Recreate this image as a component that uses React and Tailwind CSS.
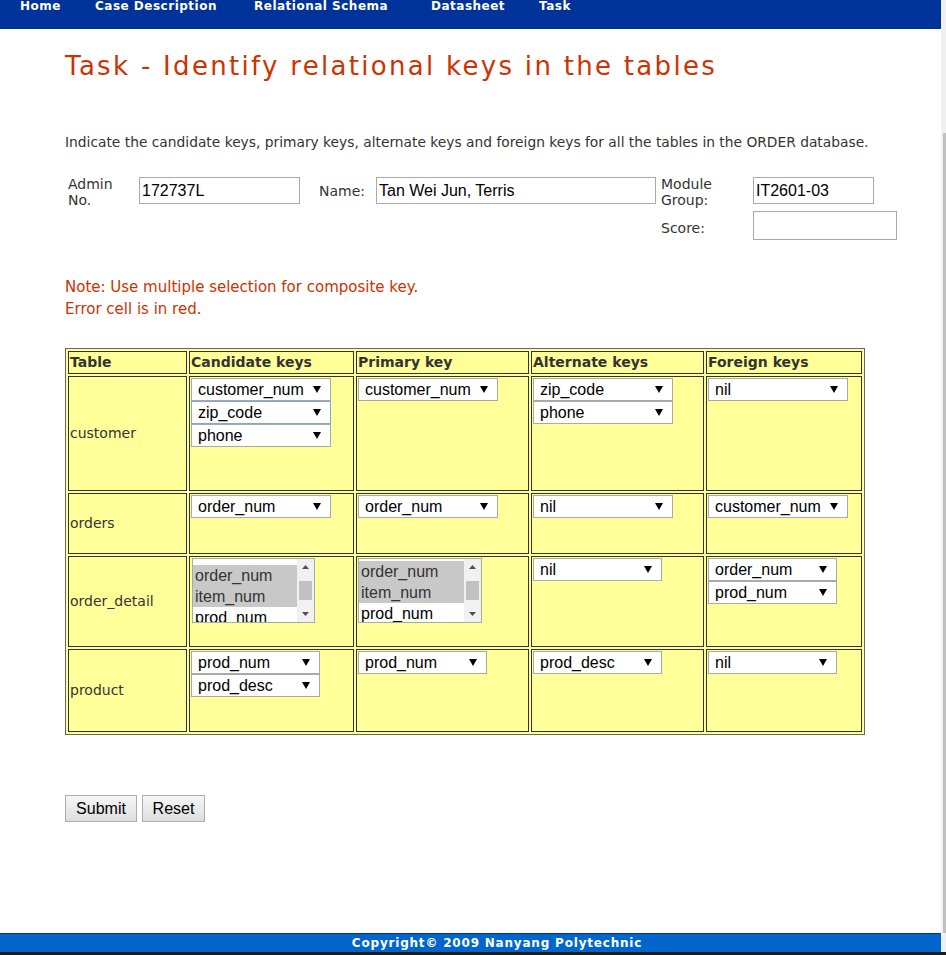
import React from "react";

const verdana = { fontFamily: '"DejaVu Sans", Verdana, sans-serif' };
const arial = { fontFamily: '"Liberation Sans", Arial, sans-serif' };

// slot widths follow the spacing of the original menu
const navItems = [
  { label: "Home", w: "w-[75px]" },
  { label: "Case Description", w: "w-[159px]" },
  { label: "Relational Schema", w: "w-[177px]" },
  { label: "Datasheet", w: "w-[108px]" },
  { label: "Task", w: "w-[60px]" },
];

function Arrow() {
  return (
    <svg width="8" height="7" viewBox="0 0 8 7" className="shrink-0">
      <path d="M0 0 H8 L4 7 Z" fill="#000" />
    </svg>
  );
}

// fake dropdown, drawn so it looks like the old select box
function Pick({ value, w, focus }) {
  return (
    <div
      style={arial}
      className={`flex h-[23px] ${w} items-center justify-between bg-white pl-[6px] pr-[9px] text-[16px] leading-none text-black ${
        focus ? "border border-[#7ea6d8]" : "border border-[#a9a9a9]"
      }`}
    >
      <span>{value}</span>
      <Arrow />
    </div>
  );
}

// multi-select listbox with its own little scrollbar
function ListBox({ items, selected, offset, w }) {
  return (
    <div className={`flex h-[65px] ${w} overflow-hidden border border-[#a9a9a9] bg-white`} style={arial}>
      <div className="flex-1 overflow-hidden">
        <div className={offset}>
          {items.map((it) => (
            <div
              key={it}
              className={`h-[21px] pl-[2px] text-[16px] leading-[21px] ${
                selected.includes(it) ? "bg-[#c8c8c8] text-[#333]" : "text-black"
              }`}
            >
              {it}
            </div>
          ))}
        </div>
      </div>
      <div className="flex w-[17px] flex-col items-center bg-[#f1f1f1]">
        <svg width="7" height="4" viewBox="0 0 7 4" className="mt-[6px]">
          <path d="M0 4 L3.5 0 L7 4 Z" fill="#505050" />
        </svg>
        <div className="mt-[12px] h-[19px] w-[13px] bg-[#c1c1c1]" />
        <div className="flex-1" />
        <svg width="7" height="4" viewBox="0 0 7 4" className="mb-[6px]">
          <path d="M0 0 L3.5 4 L7 0 Z" fill="#505050" />
        </svg>
      </div>
    </div>
  );
}

function Stack({ children }) {
  return <div className="flex flex-col">{children}</div>;
}

const rows = [
  {
    name: "customer",
    h: "h-[115px]",
    cand: (
      <Stack>
        <Pick value="customer_num" w="w-[140px]" />
        <Pick value="zip_code" w="w-[140px]" focus />
        <Pick value="phone" w="w-[140px]" />
      </Stack>
    ),
    prim: <Pick value="customer_num" w="w-[140px]" />,
    alt: (
      <Stack>
        <Pick value="zip_code" w="w-[140px]" />
        <Pick value="phone" w="w-[140px]" />
      </Stack>
    ),
    fk: <Pick value="nil" w="w-[140px]" />,
  },
  {
    name: "orders",
    h: "h-[61px]",
    cand: <Pick value="order_num" w="w-[140px]" />,
    prim: <Pick value="order_num" w="w-[140px]" />,
    alt: <Pick value="nil" w="w-[140px]" />,
    fk: <Pick value="customer_num" w="w-[140px]" />,
  },
  {
    name: "order_detail",
    h: "h-[91px]",
    cand: (
      <div className="pl-[1px]">
        <ListBox
          w="w-[123px]"
          offset="pt-[6px]"
          items={["order_num", "item_num", "prod_num"]}
          selected={["order_num", "item_num"]}
        />
      </div>
    ),
    prim: (
      <ListBox
        w="w-[124px]"
        offset="pt-[2px]"
        items={["order_num", "item_num", "prod_num"]}
        selected={["order_num", "item_num"]}
      />
    ),
    alt: <Pick value="nil" w="w-[129px]" />,
    fk: (
      <Stack>
        <Pick value="order_num" w="w-[129px]" />
        <Pick value="prod_num" w="w-[129px]" />
      </Stack>
    ),
  },
  {
    name: "product",
    h: "h-[83px]",
    cand: (
      <Stack>
        <Pick value="prod_num" w="w-[129px]" />
        <Pick value="prod_desc" w="w-[129px]" />
      </Stack>
    ),
    prim: <Pick value="prod_num" w="w-[129px]" />,
    alt: <Pick value="prod_desc" w="w-[129px]" />,
    fk: <Pick value="nil" w="w-[129px]" />,
  },
];

const cell = "border border-[#333] p-px align-top";

export default function App() {
  return (
    <div className="flex h-[955px] flex-col overflow-hidden bg-[#1c1c1c]">
      <div className="flex flex-1">
        <div className="flex w-[941px] flex-col bg-white">
          {/* top nav, page is scrolled a little so labels sit high */}
          <div
            className="flex h-[29px] items-start bg-[#003399] pl-[20px] text-[12px] font-bold leading-[13px] tracking-[0.5px] text-white"
            style={verdana}
          >
            {navItems.map((n) => (
              <span key={n.label} className={`${n.w} shrink-0`}>
                {n.label}
              </span>
            ))}
          </div>

          <div className="px-[65px] text-[#333]" style={verdana}>
            <h1 className="mt-[21px] text-[26px] leading-[32px] tracking-[2.3px] text-[#cc3300]">
              Task - Identify relational keys in the tables
            </h1>

            <p className="mt-[51px] whitespace-nowrap text-[13.8px] leading-[18px]">
              Indicate the candidate keys, primary keys, alternate keys and foreign keys for all the tables in the ORDER database.
            </p>

            <div className="mt-[25px] ml-[3px] grid grid-cols-[71px_180px_57px_285px_92px_1fr] text-[14px] leading-[16px]">
              <div>
                Admin
                <br />
                No.
              </div>
              <div className="pt-[1px]">
                <div style={arial} className="flex h-[27px] w-[161px] items-center border border-[#a9a9a9] px-[2px] text-[16px] text-black">
                  172737L
                </div>
              </div>
              <div className="pt-[7px]">Name:</div>
              <div className="pt-[1px]">
                <div style={arial} className="flex h-[27px] w-[280px] items-center border border-[#a9a9a9] px-[2px] text-[16px] text-black">
                  Tan Wei Jun, Terris
                </div>
              </div>
              <div>
                Module
                <br />
                Group:
              </div>
              <div className="pt-[1px]">
                <div style={arial} className="flex h-[27px] w-[121px] items-center border border-[#a9a9a9] px-[2px] text-[16px] text-black">
                  IT2601-03
                </div>
              </div>

              <div />
              <div />
              <div />
              <div />
              <div className="pt-[12px]">Score:</div>
              <div className="pt-[3px]">
                <div className="h-[29px] w-[144px] border border-[#a9a9a9]" />
              </div>
            </div>

            <div className="mt-[36px] text-[15px] leading-[22px] text-[#cc3300]">
              <div>Note: Use multiple selection for composite key.</div>
              <div>Error cell is in red.</div>
            </div>

            <table className="mt-[28px] w-[800px] table-fixed border-separate border-spacing-[2px] border border-[#666] bg-[#ffff99]">
              <thead>
                <tr className="h-[23px] text-left text-[14px] font-bold">
                  <th className="w-[119px] border border-[#333] px-px">Table</th>
                  <th className="w-[165px] border border-[#333] px-px">Candidate keys</th>
                  <th className="w-[173px] border border-[#333] px-px">Primary key</th>
                  <th className="w-[173px] border border-[#333] px-px">Alternate keys</th>
                  <th className="w-[156px] border border-[#333] px-px">Foreign keys</th>
                </tr>
              </thead>
              <tbody>
                {rows.map((r) => (
                  <tr key={r.name} className={r.h}>
                    <td className="border border-[#333] px-px align-middle text-[14px]">{r.name}</td>
                    <td className={cell}>{r.cand}</td>
                    <td className={cell}>{r.prim}</td>
                    <td className={cell}>{r.alt}</td>
                    <td className={cell}>{r.fk}</td>
                  </tr>
                ))}
              </tbody>
            </table>

            <div className="mt-[60px] flex gap-[5px]" style={arial}>
              <button className="h-[27px] w-[72px] border border-[#adadad] bg-gradient-to-b from-[#f6f6f6] to-[#dedede] text-[16px] text-black">
                Submit
              </button>
              <button className="h-[27px] w-[63px] border border-[#adadad] bg-gradient-to-b from-[#f6f6f6] to-[#dedede] text-[16px] text-black">
                Reset
              </button>
            </div>
          </div>

          <div className="flex-1" />

          <div
            className="flex h-[19px] items-center justify-center border-t border-[#003399] bg-[#0066cc] pl-[53px] text-[12px] font-bold tracking-[0.8px] text-white"
            style={verdana}
          >
            Copyright© 2009 Nanyang Polytechnic
          </div>
        </div>

        {/* browser scrollbar */}
        <div className="flex w-[5px] flex-col bg-[#f0f0f0]">
          <div className="h-[133px]" />
          <div className="ml-[2px] flex-1 bg-[#c1c1c1]" />
          <div className="h-[19px]" />
        </div>
      </div>
      <div className="h-[3px]" />
    </div>
  );
}
